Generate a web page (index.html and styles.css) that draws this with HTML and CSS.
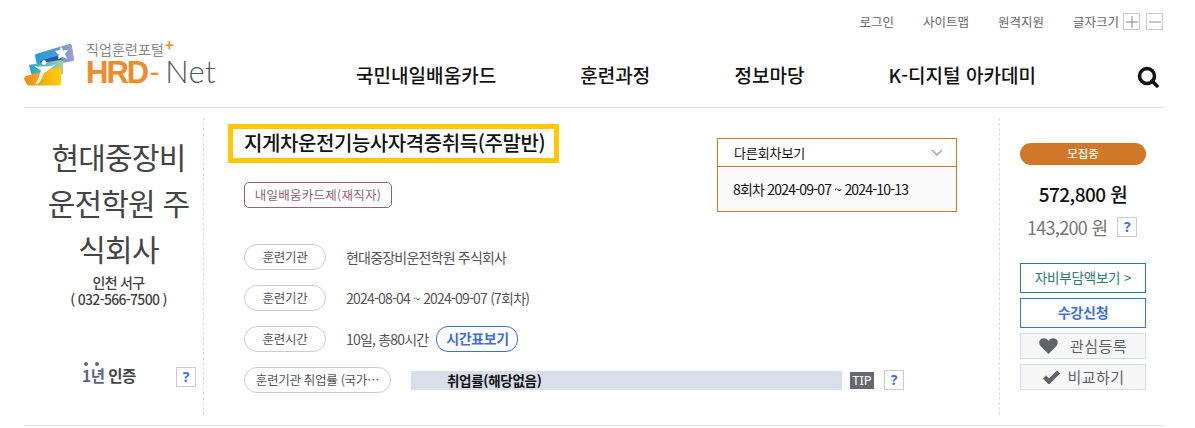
FILE: index.html
```html
<!DOCTYPE html>
<html lang="ko">
<head>
<meta charset="utf-8">
<title>HRD-Net</title>
<link rel="stylesheet" href="styles.css">
</head>
<body>
<div class="page">
  <header class="header">
    <div class="util">
      <a class="util-link">로그인</a>
      <a class="util-link">사이트맵</a>
      <a class="util-link">원격지원</a>
      <span class="util-size">글자크기</span>
      <span class="size-box"><svg width="12" height="12" viewBox="0 0 12 12"><path d="M6 0v12M0 6h12" stroke="#888" fill="none"/></svg></span>
      <span class="size-box"><svg width="12" height="12" viewBox="0 0 12 12"><path d="M0 6h12" stroke="#888" fill="none"/></svg></span>
    </div>
    <div class="navrow">
      <div class="logo">
        <svg class="logo-mark" width="50" height="42" viewBox="0 0 50 42">
          <defs>
            <linearGradient id="g1" x1="0" y1="0" x2="1" y2="0"><stop offset="0" stop-color="#1aa0dc"/><stop offset=".55" stop-color="#5a95d4"/><stop offset="1" stop-color="#a99bcb"/></linearGradient>
            <linearGradient id="g2" x1="0" y1="0" x2="1" y2="0"><stop offset="0" stop-color="#1fa5c9"/><stop offset="1" stop-color="#a8d29a"/></linearGradient>
            <linearGradient id="g3" x1="0" y1="0" x2="1" y2="0"><stop offset="0" stop-color="#f08a24"/><stop offset="1" stop-color="#fdd000"/></linearGradient>
          </defs>
          <path d="M12 10 45 0q3-.5 3 2l2 13q.3 2-2 2.300L15 23q-1.500 0-2-2L11 12q0-1.500 1-2z" fill="url(#g1)"/>
          <path d="M16 17 36 11l2 6-20 5z" fill="#1d5ba8"/>
          <path d="M5 21 36 16q3-.5 3 2v11q0 2-2 2H8q-1.500-3-3-10z" fill="url(#g2)"/>
          <path d="M2 32 35 23q2-.5 2 1.500V40q0 1.500-1.500 1.500H5q-2 0-2.500-2L0 35q0-2 2-3z" fill="url(#g3)"/>
          <path d="M19 22c-3 1-6 1-9-1 2 3 4 4 7 5-1 5-3 10-6 15l4-2c2-3 4-7 5-10 4-2 8-5 12-9-4 2-9 3-13 2z" fill="#fff"/>
          <circle cx="20" cy="18.500" r="2.300" fill="#fff"/>
          <path d="M37 2l2 4.500 5-.5-3 4 2.500 5-5-2-4.500 2.500.5-5-3.500-3.500 5-1z" fill="#fff"/>
        </svg>
        <div class="logo-text">
          <div class="logo-sub">직업훈련포털<span class="logo-plus">+</span></div>
          <div class="logo-main"><span class="logo-hrd">HRD</span><span class="logo-dash">-</span><span class="logo-net">Net</span></div>
        </div>
      </div>
      <nav class="nav">
        <a class="nav-item">국민내일배움카드</a>
        <a class="nav-item">훈련과정</a>
        <a class="nav-item">정보마당</a>
        <a class="nav-item">K-디지털 아카데미</a>
      </nav>
      <svg class="search" width="22" height="22" viewBox="0 0 22 22"><circle cx="10" cy="10" r="7.500" fill="none" stroke="#111" stroke-width="3.500"/><path d="M15 15l5 5" stroke="#111" stroke-width="3.500" stroke-linecap="round"/></svg>
    </div>
  </header>

  <main class="course">
    <aside class="org">
      <h2 class="org-name">현대중장비 운전학원 주식회사</h2>
      <p class="org-loc">인천 서구</p>
      <p class="org-tel">( 032-566-7500 )</p>
      <div class="org-cert">
        <span class="cert-label"><span class="cert-year">1년</span> 인증</span>
        <span class="help help-cert">?</span>
      </div>
    </aside>

    <section class="detail">
      <h1 class="title">지게차운전기능사자격증취득(주말반)</h1>
      <div class="tag-wrap"><span class="tag">내일배움카드제(재직자)</span></div>
      <div class="row">
        <span class="pill">훈련기관</span>
        <span class="val">현대중장비운전학원 주식회사</span>
      </div>
      <div class="row">
        <span class="pill">훈련기간</span>
        <span class="val">2024-08-04 ~ 2024-09-07 (7회차)</span>
      </div>
      <div class="row">
        <span class="pill">훈련시간</span>
        <span class="val">10일, 총80시간</span>
        <span class="timetable">시간표보기</span>
      </div>
      <div class="row row-last">
        <span class="pill pill-wide">훈련기관 취업률 (국가…</span>
        <div class="bar">취업률(해당없음)</div>
        <span class="tip">TIP</span>
        <span class="help help-tip">?</span>
      </div>
      <div class="round-box">
        <div class="round-head"><span>다른회차보기</span>
          <svg width="12" height="8" viewBox="0 0 12 8"><path d="M1 1l5 5 5-5" fill="none" stroke="#aaa" stroke-width="1.600"/></svg>
        </div>
        <div class="round-body">8회차 2024-09-07 ~ 2024-10-13</div>
      </div>
    </section>

    <aside class="side">
      <div class="status">모집중</div>
      <div class="price">572,800 원</div>
      <div class="price-sub"><span class="price-self">143,200 원</span><span class="help help-price">?</span></div>
      <a class="btn btn-teal">자비부담액보기 &gt;</a>
      <a class="btn btn-blue">수강신청</a>
      <a class="btn-soft">
        <svg width="19" height="16" viewBox="0 0 19 16"><path d="M9.500 16 1.500 8C-.5 5.500 0 2 2.500.8 5-.5 8 .3 9.500 3 11 .3 14-.5 16.500.8 19 2 19.500 5.500 17.500 8z" fill="#616169"/></svg>
        <span class="soft-a">관심등록</span>
      </a>
      <a class="btn-soft">
        <svg width="19" height="14" viewBox="0 0 19 14"><path d="M2.500 7 7 11.500 16.500 2" fill="none" stroke="#616169" stroke-width="4.500"/></svg>
        <span class="soft-b">비교하기</span>
      </a>
    </aside>
  </main>
</div>
</body>
</html>
```
FILE: styles.css
```css
* { box-sizing: border-box; }
html, body { margin: 0; padding: 0; background: #fff; }
body { font-family: "Noto Sans CJK KR", "Noto Sans", sans-serif; color: #555; overflow: hidden; }
h1, h2, p { margin: 0; font-weight: 400; }

.page { width: 1140px; margin-left: 24px; }

/* header */
.header { height: 108px; padding-top: 13px; border-bottom: 1px solid #e2e2e2; }
.util { display: flex; align-items: center; justify-content: flex-end; height: 17px; font-size: 12.500px; color: #666; }
.util-link { margin-right: 29px; line-height: 17px; }
.util-size { margin-right: 4px; line-height: 17px; }
.size-box { width: 17px; height: 17px; border: 1px solid #ccc; display: flex; align-items: center; justify-content: center; margin-right: 6px; }
.size-box:last-child { margin-right: 1px; }

.navrow { display: flex; align-items: flex-start; height: 77px; }
.logo { display: flex; width: 332px; padding-top: 14px; }
.logo-mark { flex: none; margin-right: 12px; }
.logo-text { margin-top: -3px; }
.logo-sub { font-size: 14px; line-height: 17px; color: #8a8a8a; white-space: nowrap; letter-spacing: .1px; }
.logo-plus { color: #f08a24; font-weight: 700; font-size: 15px; position: relative; top: -4px; left: 1px; line-height: 1; }
.logo-main { display: flex; align-items: baseline; line-height: 26px; font-family: "Liberation Sans", sans-serif; font-size: 31px; white-space: nowrap; }
.logo-hrd { color: #f08a2a; font-weight: 700; letter-spacing: -2px; }
.logo-dash { color: #f08a2a; font-family: "Lato", sans-serif; font-weight: 400; margin: 0 5px 0 2px; font-size: 30px; line-height: 26px; }
.logo-net { color: #55565a; font-family: "Lato", sans-serif; font-weight: 300; letter-spacing: .3px; }
.nav { display: flex; gap: 84px; padding-top: 29px; font-size: 19px; line-height: 32px; color: #111; font-weight: 500; letter-spacing: .05px; }
.nav-item { white-space: nowrap; }
.search { margin-left: auto; margin-top: 36px; margin-right: 5px; }

/* body */
.course { display: flex; height: 318px; padding: 10px 0; border-bottom: 1px solid #e2e2e2; }
.org { width: 179px; padding: 15px 14px 0 24px; text-align: center; color: #444; }
.org-name { font-size: 30px; line-height: 46px; letter-spacing: -.8px; word-break: break-all; color: #444; margin: 0 -3px 3px; }
.org-loc, .org-tel { font-size: 14px; line-height: 16px; letter-spacing: -.7px; font-weight: 500; color: #444; }
.org-tel { margin-top: 1px; }
.org-cert { display: flex; align-items: center; justify-content: space-between; margin-top: 60px; margin-left: 34px; margin-right: -7px; position: relative; height: 20px; }
.org-cert::before { content: ""; position: absolute; left: 2px; top: -5px; width: 4px; height: 4px; border-radius: 50%; background: #5a6490; box-shadow: 11px 0 0 #5a6490; }
.cert-label { font-size: 15.500px; font-weight: 700; color: #444; letter-spacing: -.5px; line-height: 20px; white-space: nowrap; margin-top: -5px; }
.cert-year { color: #5a6490; }
.help { width: 20px; height: 20px; border: 1px solid #ccc; display: flex; align-items: center; justify-content: center; font: 700 14px/1 "Noto Sans", sans-serif; color: #3f6fdc; background: #fff; flex: none; }

.detail { position: relative; flex: 1; border-left: 1px dashed #ddd; border-right: 1px dashed #ddd; padding: 6px 0 0 24px; }
.title { width: 331px; height: 39px; border: 5px solid #ffc800; padding-left: 11px; font-size: 20px; line-height: 28px; font-weight: 500; color: #111; letter-spacing: -.42px; white-space: nowrap; }
.tag-wrap { margin: 18px 0 37px 16px; height: 26px; }
.tag { display: inline-block; width: 148px; height: 26px; border: 1px solid #96606f; border-radius: 5px; text-align: center; font-size: 12.500px; line-height: 23px; color: #96606f; letter-spacing: .25px; white-space: nowrap; }
.row { display: flex; align-items: center; height: 26px; margin: 0 0 15px 16px; }
.pill { width: 82px; height: 26px; border: 1px solid #ccc; border-radius: 13px; text-align: center; font-size: 12.500px; line-height: 24px; color: #555; margin-right: 20px; white-space: nowrap; letter-spacing: -.2px; flex: none; }
.pill-wide { width: 147px; margin-right: 20px; letter-spacing: -.3px; }
.val { font-size: 14px; line-height: 24px; color: #555; letter-spacing: -.8px; white-space: nowrap; }
.timetable { margin-left: 8px; width: 82px; height: 26px; border: 1px solid #3f6fdc; border-radius: 12px; text-align: center; font-size: 14px; font-weight: 700; line-height: 23px; color: #3f6fdc; letter-spacing: -.4px; }
.bar { width: 431px; height: 19px; background: #d8deea; padding-left: 36px; font-size: 13.500px; font-weight: 700; line-height: 18px; color: #111; letter-spacing: -.3px; flex: none; }
.tip { margin-left: 8px; width: 24px; height: 17px; background: #67676f; color: #fff; font: 400 13px/17px "Noto Sans", sans-serif; text-align: center; flex: none; }
.help-tip { margin-left: 10px; }

.round-box { position: absolute; left: 513px; top: 20px; width: 240px; height: 74px; border: 1px solid #d07828; background: #fafafa; }
.round-head { display: flex; align-items: center; justify-content: space-between; height: 28px; padding: 0 13px 0 16px; background: #fff; border-bottom: 1px solid #d07828; font-size: 13px; color: #111; letter-spacing: -.1px; }
.round-body { padding: 0 15px; font-size: 14px; line-height: 44px; color: #111; letter-spacing: -.8px; white-space: nowrap; }

.side { width: 164px; padding: 25px 18px 0 20px; text-align: center; }
.status { height: 22px; border-radius: 11px; background: #d07828; color: #fff; font-size: 11.500px; font-weight: 500; line-height: 21px; }
.price { margin-top: 15px; font-size: 19px; line-height: 28px; font-weight: 500; color: #111; letter-spacing: -.55px; white-space: nowrap; }
.price-sub { display: flex; align-items: center; height: 20px; margin-top: 9px; padding-left: 7px; }
.price-self { font-size: 18px; line-height: 20px; color: #777; letter-spacing: -.7px; white-space: nowrap; }
.help-price { margin-left: 10px; }
.btn { display: block; height: 30px; border: 1px solid; font-size: 13.500px; line-height: 27px; letter-spacing: -.2px; white-space: nowrap; margin-bottom: 5px; }
.btn-teal { margin-top: 26px; border-color: #2a8078; color: #2a7a78; }
.btn-blue { border-color: #3f6fdc; color: #3f6fdc; font-weight: 700; font-size: 14px; }
.btn-soft { display: flex; align-items: center; justify-content: center; height: 26px; border: 1px solid #d8deea; background: #f7f7f7; margin-bottom: 5px; font-size: 15px; line-height: 24px; color: #616169; letter-spacing: .4px; white-space: nowrap; }
.soft-a { margin-left: 12px; }
.soft-b { margin-left: 7px; }
```
